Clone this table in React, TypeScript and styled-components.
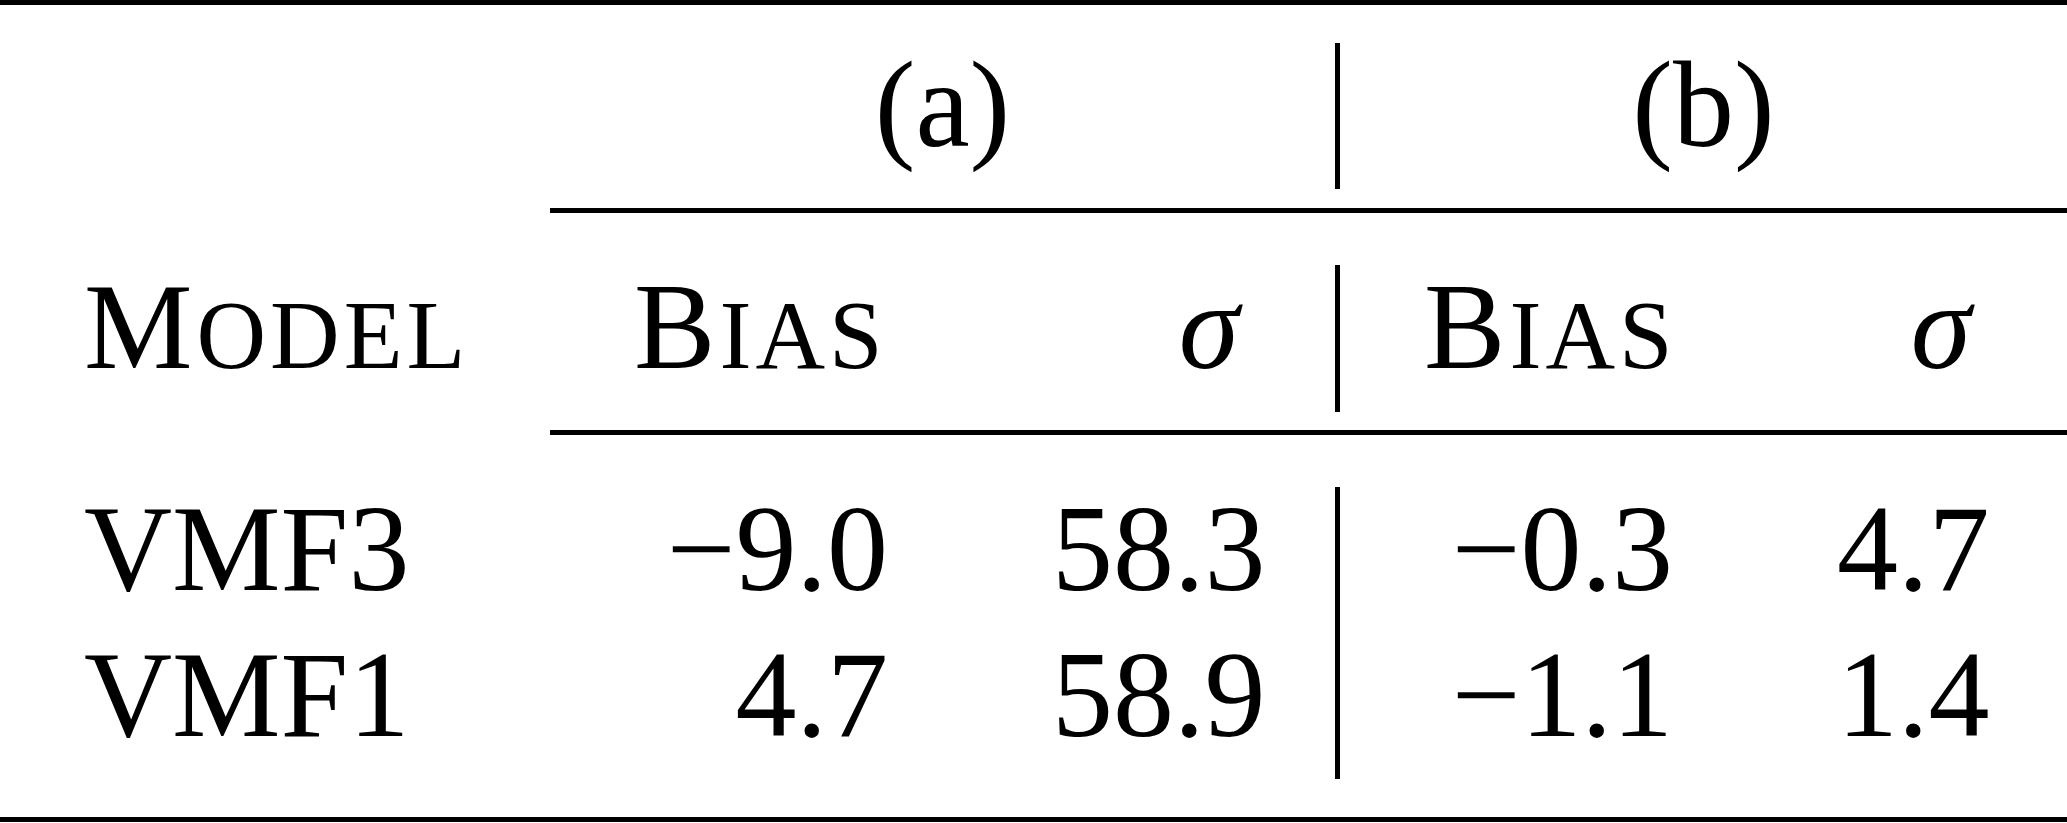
import styled, { createGlobalStyle } from "styled-components";

const GlobalStyle = createGlobalStyle`
  html, body {
    margin: 0;
    padding: 0;
    background: #fff;
  }
  body {
    font-family: "Liberation Serif", "Times New Roman", serif;
    color: #000;
  }
`;

// column widths: model | bias (a) | sigma (a) | divider | bias (b) | sigma (b)
const COLUMNS = "550px 418px 367px 5px 413px 314px";

const rows = [
  { model: "VMF3", a: ["−9.0", "58.3"], b: ["−0.3", "4.7"] },
  { model: "VMF1", a: ["4.7", "58.9"], b: ["−1.1", "1.4"] },
];

const App = () => {
  return (
    <>
      <GlobalStyle />
      <Table>
        <Rule $below={38} />
        <Row>
          <Cell />
          <Cell $span={2} $align="center">(a)</Cell>
          <Divider />
          <Cell $span={2} $align="center">(b)</Cell>
        </Row>
        <Rule $partial $above={19} $below={52} />
        <Row $h={147}>
          <Cell $align="left">
            <Caps>M<Small>odel</Small></Caps>
          </Cell>
          <Cell>
            <Caps>B<Small>ias</Small></Caps>
          </Cell>
          <Cell>
            <Sym>σ</Sym>
          </Cell>
          <Divider />
          <Cell>
            <Caps>B<Small>ias</Small></Caps>
          </Cell>
          <Cell>
            <Sym>σ</Sym>
          </Cell>
        </Row>
        <Rule $partial $above={18} $below={52} />
        {rows.map((r) => (
          <Row key={r.model}>
            <Cell $align="left">{r.model}</Cell>
            <Cell $tight>{r.a[0]}</Cell>
            <Cell $tight>{r.a[1]}</Cell>
            <Divider />
            <Cell $tight>{r.b[0]}</Cell>
            <Cell>{r.b[1]}</Cell>
          </Row>
        ))}
        <Rule $above={38} />
      </Table>
    </>
  );
};

const Table = styled.div`
  width: 2067px;
  display: flex;
  flex-direction: column;
  font-size: 122px;
  line-height: 123px;
`;
const Rule = styled.div<{ $partial?: boolean; $above?: number; $below?: number }>`
  height: 5px;
  background: #000;
  margin-left: ${(p) => (p.$partial ? 550 : 0)}px;
  margin-top: ${(p) => p.$above ?? 0}px;
  margin-bottom: ${(p) => p.$below ?? 0}px;
`;
const Row = styled.div<{ $h?: number }>`
  display: grid;
  grid-template-columns: ${COLUMNS};
  height: ${(p) => p.$h ?? 146}px;
`;
const Cell = styled.div<{ $align?: "left" | "right" | "center"; $span?: number; $tight?: boolean }>`
  grid-column: span ${(p) => p.$span ?? 1};
  align-self: start;
  padding: 0 ${(p) => (p.$tight ? 80 : 84)}px 0 84px;
  text-align: ${(p) => p.$align ?? "right"};
  white-space: nowrap;
`;
const Divider = styled.div`
  width: 5px;
  background: #000;
`;
const Caps = styled.span`
  letter-spacing: 4px;
`;
const Small = styled.span`
  font-size: 0.79em;
  text-transform: uppercase;
`;
const Sym = styled.span`
  font-style: italic;
  margin-right: 12px;
`;

export default App;
